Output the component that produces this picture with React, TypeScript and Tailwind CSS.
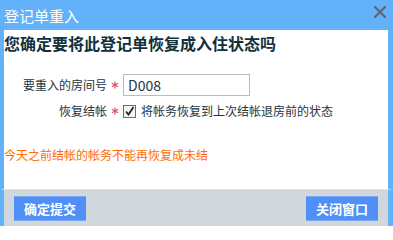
const font = { fontFamily: '"Microsoft YaHei", "Noto Sans CJK SC", "Liberation Sans", sans-serif' }

function Star() {
  return (
    <span className="flex w-[16px] items-center justify-center">
      <svg width="8" height="8" viewBox="0 0 8 8">
        <path d="M4 0.5 V7.5 M0.9 2.2 L7.1 5.8 M7.1 2.2 L0.9 5.8" stroke="#e2525c" strokeWidth="1.2" />
      </svg>
    </span>
  )
}

export default function App() {
  return (
    <div className="flex h-[226px] w-[393px] flex-col bg-[#62b1f9]" style={font}>
      <div className="flex h-[30px] shrink-0 items-center justify-between pl-[4px] pr-[6px]">
        <span className="text-[15px] leading-none text-white">登记单重入</span>
        <svg width="14" height="14" viewBox="0 0 14 14" className="mb-[6px]">
          <path d="M1.5 1.5 L12.5 12.5 M12.5 1.5 L1.5 12.5" stroke="#5c6670" strokeWidth="2.2" />
        </svg>
      </div>
      <div className="ml-[4px] mr-[5px] flex flex-1 flex-col bg-white">
        <div className="flex flex-1 flex-col">
          <h1 className="mt-[3px] text-[16px] font-bold leading-[20px] text-[#12303c]">
            您确定要将此登记单恢复成入住状态吗
          </h1>
          <div className="mt-[21px] flex items-center text-[12px] text-[#1f3440]">
            <span className="w-[103px] text-right">要重入的房间号</span>
            <Star />
            <div className="flex h-[22px] w-[127px] items-center border border-[#b8bcc0] pl-[4px] text-[14px] text-[#1f3440]">
              D008
            </div>
          </div>
          <div className="mt-[6px] flex items-center text-[12px] text-[#1f3440]">
            <span className="w-[103px] text-right">恢复结帐</span>
            <Star />
            <span className="flex h-[13px] w-[13px] items-center justify-center border border-[#6b6b6b] bg-[#f4f4f4]">
              <svg width="11" height="11" viewBox="0 0 11 11">
                <path d="M2 5.5 L4.5 8.5 L9.5 1" fill="none" stroke="#222" strokeWidth="1.8" />
              </svg>
            </span>
            <span className="ml-[5px]">将帐务恢复到上次结帐退房前的状态</span>
          </div>
          <p className="mt-[26px] text-[12px] text-[#ff6d00]">今天之前结帐的帐务不能再恢复成未结</p>
        </div>
        <div className="-ml-[4px] -mr-[5px] flex h-[37px] shrink-0 items-start justify-between border-l-[4px] border-r-[5px] border-t border-[#62b1f9] border-t-[#dfe4e8] bg-[#d0d8dd] pl-[10px] pr-[10px] pt-[6px]">
          <button className="flex h-[25px] w-[72px] items-center justify-center border-y border-[#7aa8f0] bg-[#4f8ff7] text-[13px] font-bold text-white">
            确定提交
          </button>
          <button className="flex h-[25px] w-[72px] items-center justify-center border-y border-[#7aa8f0] bg-[#4f8ff7] text-[13px] font-bold text-white">
            关闭窗口
          </button>
        </div>
      </div>
    </div>
  )
}
